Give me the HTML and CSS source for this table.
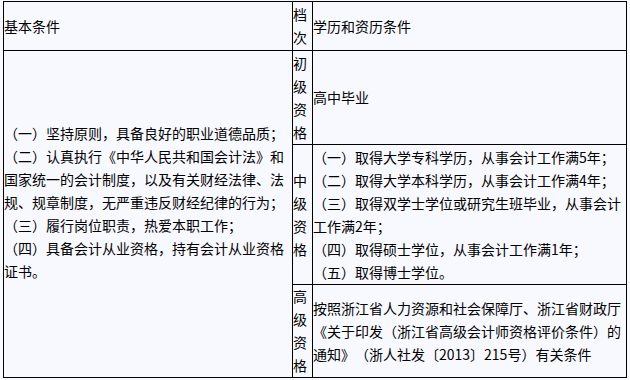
FILE: index.html
```html
<!DOCTYPE html>
<html lang="zh-CN">
<head>
<meta charset="utf-8">
<link rel="stylesheet" href="styles.css">
</head>
<body>
<table class="grid">
  <colgroup>
    <col class="c-basic">
    <col class="c-level">
    <col class="c-edu">
  </colgroup>
  <tr class="r-head">
    <td>基本条件</td>
    <td>档次</td>
    <td>学历和资历条件</td>
  </tr>
  <tr class="r-junior">
    <td rowspan="3" class="basic">
      <div class="lines">
        （一）坚持原则，具备良好的职业道德品质；<br>
        （二）认真执行《中华人民共和国会计法》和国家统一的会计制度，以及有关财经法律、法规、规章制度，无严重违反财经纪律的行为；<br>
        （三）履行岗位职责，热爱本职工作；<br>
        （四）具备会计从业资格，持有会计从业资格证书。
      </div>
    </td>
    <td>初级资格</td>
    <td>高中毕业</td>
  </tr>
  <tr class="r-middle">
    <td>中级资格</td>
    <td>（一）取得大学专科学历，从事会计工作满5年；<br>（二）取得大学本科学历，从事会计工作满4年；<br>（三）取得双学士学位或研究生班毕业，从事会计工作满2年；<br>（四）取得硕士学位，从事会计工作满1年；<br>（五）取得博士学位。</td>
  </tr>
  <tr class="r-senior">
    <td>高级资格</td>
    <td>按照浙江省人力资源和社会保障厅、浙江省财政厅《关于印发（浙江省高级会计师资格评价条件）的通知》（浙人社发〔2013〕215号）有关条件</td>
  </tr>
</table>
</body>
</html>
```

FILE: styles.css
```css
html, body {
  margin: 0;
  padding: 0;
  background: #f8f9fe;
}
body {
  padding: 1px 0 0 3px;
  font-family: "Noto Sans CJK SC", "Noto Sans", sans-serif;
  font-size: 14px;
  line-height: 23px;
  color: #000;
  text-spacing-trim: space-all;
}
.grid {
  border-collapse: collapse;
  table-layout: fixed;
  width: 623px;
}
.grid td {
  border: 1px solid #000;
  padding: 0;
  vertical-align: middle;
  word-break: break-all;
}
.c-basic { width: 289px; }
.c-level { width: 20px; }
.c-edu { width: 314px; }
.r-head td { height: 48px; }
.r-junior td { height: 93px; }
.r-middle td { height: 139px; }
.r-senior td { height: 92px; }
.basic .lines {
  padding-bottom: 23px;
}
```
